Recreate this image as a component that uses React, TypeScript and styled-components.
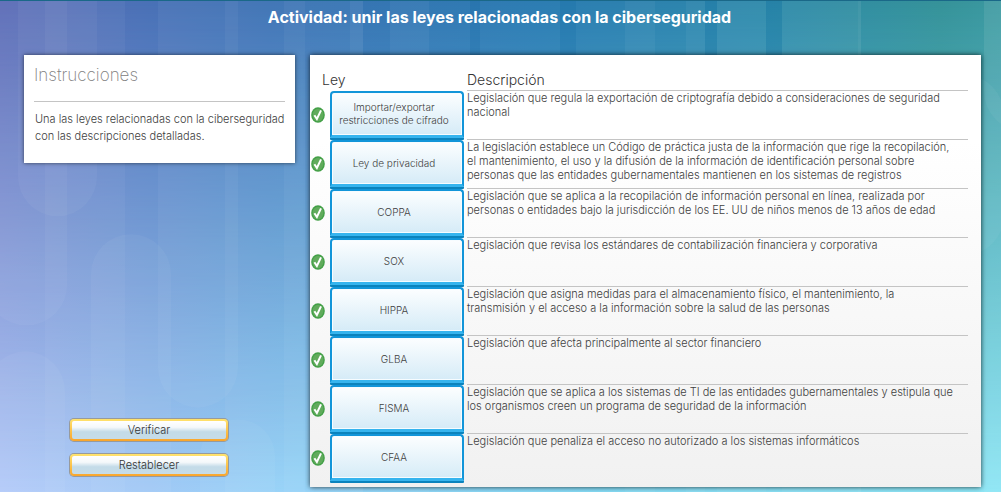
import React from "react";
import styled, { createGlobalStyle } from "styled-components";

const GlobalStyle = createGlobalStyle`
  *, *::before, *::after { box-sizing: border-box; }
  body {
    margin: 0;
    color: #404040;
    font-family: Inter, "Liberation Sans", Arial, sans-serif;
    font-size: 11px;
    font-weight: 300;
    line-height: 14px;
  }
`;

const Page = styled.div`
  position: relative;
  isolation: isolate;
  display: flex;
  flex-direction: column;
  min-height: 100vh;
  padding: 0 20px 5px 24px;
  border-top: 1px solid #1a6888;
  border-bottom: 1px solid #1b6f9c;
  background: linear-gradient(90deg, #b4cbf9 0%, #a2caf6 15%, #94d3f8 30%, #86dbf5 60%, #8fe6f5 100%);

  &::before {
    content: "";
    position: absolute;
    inset: 0;
    z-index: -2;
    background: linear-gradient(90deg, #5b6bb6 0%, #4a70b6 14%, #3a70b3 27%, #2c7cb2 54%, #2c88aa 76%, #359299 94%, #3a98a0 100%);
    mask-image: linear-gradient(180deg, #000 0%, transparent 100%);
  }
`;

const Backdrop = styled.svg`
  position: absolute;
  inset: 0;
  z-index: -1;
  width: 100%;
  height: 100%;
`;

const Title = styled.h1`
  margin: 0;
  padding: 6px 6px 28px 0;
  color: #fff;
  font-size: 16px;
  font-weight: 700;
  line-height: 20px;
  text-align: center;
`;

const Columns = styled.main`
  display: grid;
  grid-template-columns: 271px 1fr;
  gap: 15px;
  flex: 1;
`;

const Sidebar = styled.aside`
  display: flex;
  flex-direction: column;
  justify-content: space-between;
  padding-bottom: 11px;
`;

const Instructions = styled.section`
  width: 100%;
  padding: 10px 10px 18px;
  background: #fff;
  box-shadow: 0 0 4px rgba(0, 0, 0, 0.6);
`;

const InstructionsTitle = styled.h2`
  margin: 0;
  padding-bottom: 16px;
  border-bottom: 1px solid #c4c4c4;
  color: #808080;
  font-size: 17px;
  font-weight: 200;
  line-height: 20px;
`;

const InstructionsText = styled.p`
  margin: 0;
  padding-top: 9px;
  padding-left: 1px;
  line-height: 17px;
`;

const Actions = styled.div`
  display: flex;
  flex-direction: column;
  gap: 13px;
  padding-left: 46px;
`;

const ActionButton = styled.button`
  width: 158px;
  height: 22px;
  padding: 0;
  border: 2px solid transparent;
  border-radius: 4px;
  background:
    linear-gradient(#fff 0%, #f4f8fa 35%, #c3dbe8 60%, #c6dce8 100%) padding-box,
    linear-gradient(#ffe36e, #f9a52c) border-box;
  box-shadow: 0 0 0 1px #969a9e;
  color: #333;
  font: inherit;
  cursor: pointer;
`;

const Board = styled.section`
  padding: 17px 13px 4px 0;
  background: linear-gradient(#fff 20%, #f1f1f1 100%);
  box-shadow: 0 0 5px rgba(0, 0, 0, 0.75);
`;

const LawTable = styled.table`
  width: 100%;
  border-collapse: collapse;
  table-layout: fixed;
`;

const MarkColumn = styled.col`
  width: 20px;
`;

const LawColumn = styled.col`
  width: 137px;
`;

const HeadCell = styled.th<{ $indent?: number }>`
  height: 18px;
  padding: 0 0 2px ${({ $indent = 0 }) => $indent}px;
  color: #333;
  font-size: 14px;
  font-weight: 300;
  line-height: 16px;
  text-align: left;
`;

const MarkCell = styled.td`
  height: 49px;
  padding: 0 0 0 1px;
  vertical-align: middle;

  svg { display: block; }
`;

const LawCell = styled.td`
  padding: 0;
  vertical-align: top;
`;

const LawButton = styled.button`
  display: block;
  width: 134px;
  height: 47px;
  padding: 1px 10px 0 4px;
  border: 2px solid #1295d9;
  border-bottom: 3px solid #36b4ee;
  border-radius: 4px 4px 1px 1px;
  background: linear-gradient(#fcfeff, #d5ebf7);
  box-shadow: inset 0 0 0 1px #f6fcff, inset 0 -1px #8ccdec, 0 2px #0b83bd;
  color: #404040;
  font: inherit;
  font-size: 10px;
  line-height: 13px;
  cursor: grab;
`;

const DescriptionCell = styled.td`
  padding: 0 13px 0 0;
  border-top: 1px solid #c4c4c4;
  vertical-align: top;
`;

const laws = [
  {
    name: "Importar/exportar restricciones de cifrado",
    text: "Legislación que regula la exportación de criptografía debido a consideraciones de seguridad nacional",
  },
  {
    name: "Ley de privacidad",
    text: "La legislación establece un Código de práctica justa de la información que rige la recopilación, el mantenimiento, el uso y la difusión de la información de identificación personal sobre personas que las entidades gubernamentales mantienen en los sistemas de registros",
  },
  {
    name: "COPPA",
    text: "Legislación que se aplica a la recopilación de información personal en línea, realizada por personas o entidades bajo la jurisdicción de los EE. UU de niños menos de 13 años de edad",
  },
  {
    name: "SOX",
    text: "Legislación que revisa los estándares de contabilización financiera y corporativa",
  },
  {
    name: "HIPPA",
    text: "Legislación que asigna medidas para el almacenamiento físico, el mantenimiento, la transmisión y el acceso a la información sobre la salud de las personas",
  },
  {
    name: "GLBA",
    text: "Legislación que afecta principalmente al sector financiero",
  },
  {
    name: "FISMA",
    text: "Legislación que se aplica a los sistemas de TI de las entidades gubernamentales y estipula que los organismos creen un programa de seguridad de la información",
  },
  {
    name: "CFAA",
    text: "Legislación que penaliza el acceso no autorizado a los sistemas informáticos",
  },
];

const CheckMark = () => (
  <svg width="14" height="16" viewBox="0 0 14 16" role="img" aria-label="Correcto">
    <ellipse cx="7" cy="8" rx="6.8" ry="7.7" fill="#43a047" />
    <ellipse cx="7" cy="8" rx="5.4" ry="6.3" fill="#61ab5c" />
    <path d="M3.4 8.2 L5.9 12 L10 3.4" fill="none" stroke="#fff" strokeWidth="2" />
  </svg>
);

const BackdropShapes = () => (
  <Backdrop aria-hidden="true" viewBox="0 0 1001 490" preserveAspectRatio="none">
    <g fill="#fff" fillOpacity="0.045">
      <rect x="-14" y="-60" width="81" height="384" rx="40" />
      <rect x="18" y="-60" width="79" height="275" rx="40" />
      <rect x="45" y="-60" width="80" height="700" />
      <rect x="-14" y="350" width="79" height="260" rx="40" />
      <rect x="91" y="233" width="80" height="340" rx="40" />
      <rect x="158" y="-60" width="80" height="466" rx="40" />
      <rect x="225" y="-20" width="80" height="600" />
      <rect x="200" y="418" width="75" height="200" rx="37" />
      <rect x="284" y="-20" width="79" height="600" />
      <rect x="350" y="-20" width="13" height="600" />
      <rect x="390" y="-20" width="39" height="600" />
      <rect x="625" y="-20" width="30" height="600" />
      <rect x="686" y="-20" width="19" height="600" />
      <rect x="717" y="-20" width="49" height="600" />
      <rect x="782" y="-20" width="79" height="600" />
      <rect x="858" y="-20" width="3" height="600" />
      <rect x="984" y="-60" width="80" height="700" />
      <rect x="984" y="-60" width="80" height="190" rx="40" />
      <rect x="925" y="74" width="79" height="180" rx="40" />
    </g>
    <g fill="#005f9f" fillOpacity="0.14">
      <rect x="470" y="0" width="10" height="60" />
      <rect x="560" y="0" width="16" height="60" />
      <rect x="705" y="0" width="12" height="60" />
      <rect x="766" y="0" width="16" height="60" />
    </g>
  </Backdrop>
);

export default function App() {
  return (
    <>
      <GlobalStyle />
      <Page>
        <BackdropShapes />
        <Title>Actividad: unir las leyes relacionadas con la ciberseguridad</Title>
        <Columns>
          <Sidebar>
            <Instructions>
              <InstructionsTitle>Instrucciones</InstructionsTitle>
              <InstructionsText>
                Una las leyes relacionadas con la ciberseguridad con las descripciones detalladas.
              </InstructionsText>
            </Instructions>
            <Actions>
              <ActionButton type="button">Verificar</ActionButton>
              <ActionButton type="button">Restablecer</ActionButton>
            </Actions>
          </Sidebar>
          <Board>
            <LawTable>
              <colgroup>
                <MarkColumn />
                <LawColumn />
                <col />
              </colgroup>
              <thead>
                <tr>
                  <HeadCell colSpan={2} $indent={12}>Ley</HeadCell>
                  <HeadCell>Descripción</HeadCell>
                </tr>
              </thead>
              <tbody>
                {laws.map((law) => (
                  <tr key={law.name}>
                    <MarkCell><CheckMark /></MarkCell>
                    <LawCell><LawButton type="button">{law.name}</LawButton></LawCell>
                    <DescriptionCell>{law.text}</DescriptionCell>
                  </tr>
                ))}
              </tbody>
            </LawTable>
          </Board>
        </Columns>
      </Page>
    </>
  );
}
